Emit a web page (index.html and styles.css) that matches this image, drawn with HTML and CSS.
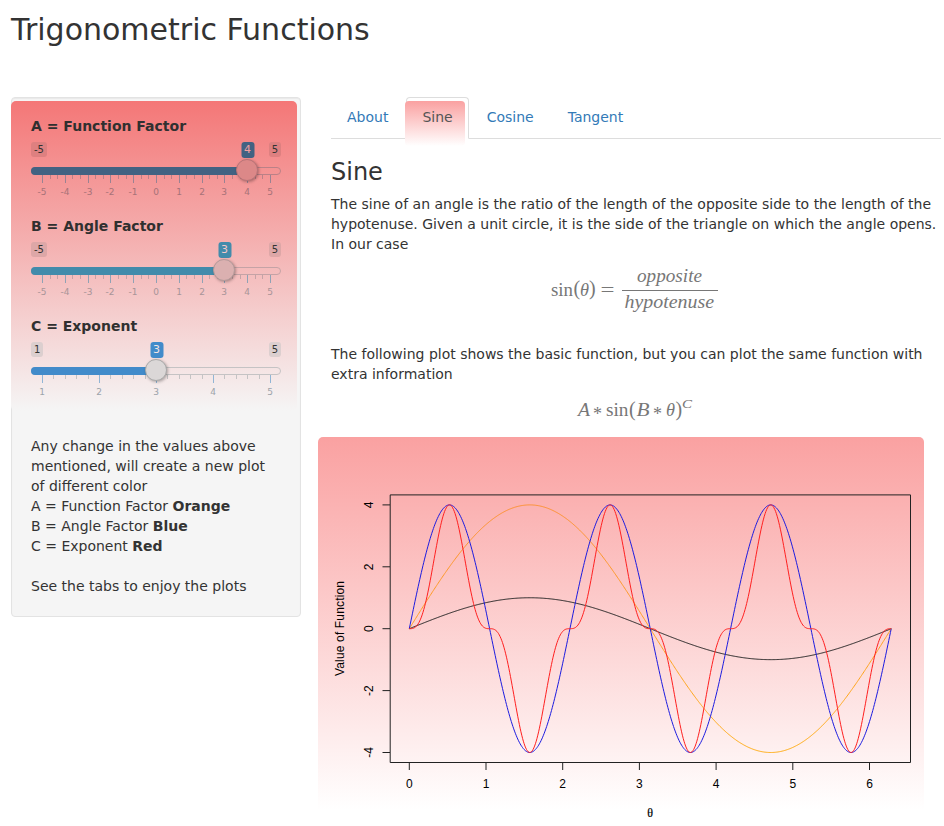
FILE: index.html
```html
<!DOCTYPE html>
<html lang="en">
<head>
<meta charset="utf-8">
<title>Trigonometric Functions</title>
<link rel="stylesheet" href="styles.css">
</head>
<body>
<h2 class="page-title">Trigonometric Functions</h2>
<div class="layout">
  <form class="well">
    <div class="slider slider-a" data-min="-5" data-max="5" data-value="4" data-minor="3">
      <label>A = Function Factor</label>
      <div class="control"></div>
    </div>
    <div class="slider slider-b" data-min="-5" data-max="5" data-value="3" data-minor="3">
      <label>B = Angle Factor</label>
      <div class="control"></div>
    </div>
    <div class="slider slider-c" data-min="1" data-max="5" data-value="3" data-minor="5">
      <label>C = Exponent</label>
      <div class="control"></div>
    </div>
    <div class="notes">Any change in the values above mentioned, will create a new plot of different color<br>A = Function Factor <b>Orange</b><br>B = Angle Factor <b>Blue</b><br>C = Exponent <b>Red</b><br><br>See the tabs to enjoy the plots</div>
  </form>
  <main class="content">
    <ul class="tabs">
      <li><a>About</a></li>
      <li class="active"><a>Sine</a></li>
      <li><a>Cosine</a></li>
      <li><a>Tangent</a></li>
    </ul>
    <h3>Sine</h3>
    <p>The sine of an angle is the ratio of the length of the opposite side to the length of the hypotenuse. Given a unit circle, it is the side of the triangle on which the angle opens. In our case</p>
    <svg class="math math-ratio" viewBox="331 254 610 90">
      <text x="551" y="295.5" textLength="22" lengthAdjust="spacingAndGlyphs">sin</text>
      <text x="573.5" y="295" class="paren">(</text>
      <text class="it" x="580" y="295.5" textLength="9" lengthAdjust="spacingAndGlyphs">θ</text>
      <text x="589" y="295" class="paren">)</text>
      <text x="600.5" y="295.5" textLength="14" lengthAdjust="spacingAndGlyphs">=</text>
      <text class="it" x="637" y="282" textLength="65" lengthAdjust="spacingAndGlyphs">opposite</text>
      <path d="M622 290.5H718"/>
      <text class="it" x="624.5" y="308" textLength="89.5" lengthAdjust="spacingAndGlyphs">hypotenuse</text>
    </svg>
    <p>The following plot shows the basic function, but you can plot the same function with extra information</p>
    <svg class="math math-general" viewBox="331 384 610 53">
      <text class="it" x="578" y="416.3" textLength="12" lengthAdjust="spacingAndGlyphs">A</text>
      <text x="593" y="420">*</text>
      <text x="606" y="416.3" textLength="22.5" lengthAdjust="spacingAndGlyphs">sin</text>
      <text x="629" y="416" class="paren">(</text>
      <text class="it" x="636.5" y="416.3" textLength="13" lengthAdjust="spacingAndGlyphs">B</text>
      <text x="653" y="420">*</text>
      <text class="it" x="666" y="416.3" textLength="9" lengthAdjust="spacingAndGlyphs">θ</text>
      <text x="675.5" y="416" class="paren">)</text>
      <text class="it small" x="682" y="408.3" textLength="10" lengthAdjust="spacingAndGlyphs">C</text>
    </svg>
    <div class="plot"><svg id="chart" viewBox="318 437 606 389"></svg></div>
  </main>
</div>
<script src="app.js"></script>
</body>
</html>
```
FILE: styles.css
```css
* { box-sizing: border-box; }
body {
  margin: 0;
  height: 826px;
  overflow: hidden;
  background: #fff;
  color: #333;
  font: 14px/20px "DejaVu Sans", sans-serif;
}
h2, h3 { font-weight: 400; margin: 0; }
.page-title { font-size: 30px; line-height: 33px; padding: 13px 11px 51px; }
.layout { display: flex; gap: 30px; padding-left: 11px; align-items: flex-start; }
.well {
  width: 290px;
  height: 520px;
  flex: none;
  padding: 18px 19px;
  border: 1px solid #e3e3e3;
  border-radius: 4px;
  background-color: #f5f5f5;
  box-shadow: inset 0 1px 1px rgba(0, 0, 0, .05);
  position: relative;
}
.well::before {
  content: "";
  position: absolute;
  left: -1px;
  top: 3px;
  width: 286px;
  height: 310px;
  border-radius: 5px;
  background: linear-gradient(#f47777, #f5f5f5);
}
.slider { height: 100px; position: relative; }
.slider label { display: block; font-weight: 700; height: 20px; color: #303030; }
.slider-a { --bar: #426282; --knob: #dc8888; --edge: #b87478; --badge: #de8080; --tick: #9b8292; --minor: #bb8187; --num: #a77278; --current: #f0a0a0; }
.slider-b { --bar: #428bab; --knob: #dbb0b0; --edge: #b49a9a; --badge: #dda7a7; --tick: #90a2b5; --minor: #c5a3a6; --num: #a89498; --current: #f4c8c8; }
.slider-c { --bar: #428bca; --knob: #dbd7d7; --edge: #aaa; --badge: #dccfcf; --tick: #91b5d5; --minor: #c5c3c4; --num: #9ba3aa; --current: #f4e4e4; }
.control { position: relative; width: 250px; height: 70px; }
.badge {
  position: absolute;
  top: 6px;
  height: 15px;
  padding: 0 3px;
  border-radius: 3px;
  background: var(--badge);
  color: #333;
  font-size: 10px;
  line-height: 15px;
}
.badge.min { left: 0; }
.badge.max { right: 0; }
.badge.current {
  transform: translateX(-50%);
  height: 16px;
  width: 13px;
  text-align: center;
  font-size: 11px;
  line-height: 16px;
  background: var(--bar);
  color: var(--current);
}
.track, .fill { position: absolute; left: 0; top: 31px; height: 8px; border-radius: 5px; }
.track { width: 250px; border: 1px solid var(--minor); }
.fill { background: var(--bar); }
.knob {
  position: absolute;
  top: 23px;
  width: 22px;
  height: 22px;
  border: 1px solid var(--edge);
  border-radius: 50%;
  background: var(--knob);
  box-shadow: 1px 1px 3px rgba(0, 0, 0, .3);
  transform: translateX(-50%);
}
.ticks { position: absolute; left: 0; top: 39px; width: 250px; height: 25px; }
.ticks text { font: 9px "DejaVu Sans", sans-serif; text-anchor: middle; fill: var(--num); }
.ticks .major { fill: var(--tick); }
.ticks .minor { fill: var(--minor); }
.notes { position: relative; margin-top: 20px; }
.content { width: 610px; }
.tabs { display: flex; gap: 2px; list-style: none; height: 42px; margin: 0; padding: 0; border-bottom: 1px solid #ddd; }
.tabs li { height: 42px; }
.tabs a {
  position: relative;
  display: block;
  height: 42px;
  padding: 9px 15px 11px;
  border: 1px solid transparent;
  border-radius: 4px 4px 0 0;
  color: #337ab7;
}
.tabs .active a { border-color: #ddd; border-bottom-color: #fff; background: #fff; color: #555; z-index: 0; }
.tabs .active a::before {
  content: "";
  position: absolute;
  z-index: -1;
  left: -2px;
  top: 3px;
  width: 60px;
  height: 45px;
  border-radius: 4px;
  background: linear-gradient(#faa1a1, #fff);
}
h3 { font-size: 24px; line-height: 26px; padding: 20px 0 9px; }
p { margin: 0; }
.math { display: block; width: 610px; }
.math-ratio { height: 90px; }
.math-general { height: 53px; }
.math text { font-family: "Liberation Serif", serif; fill: #777; font-size: 18px; }
.math .it { font-style: italic; }
.math .paren { font-size: 20px; }
.math .small { font-size: 13px; }
.math path { stroke: #777; }
.plot { margin-left: -13px; width: 606px; height: 389px; border-radius: 5px; background: linear-gradient(#faa1a1, #fff 373px); }
#chart { display: block; width: 606px; height: 389px; }
#chart text { font: 12px "Liberation Sans", sans-serif; text-anchor: middle; fill: #000; }
#chart .theta { font: 12px "Liberation Serif", serif; stroke: #000; stroke-width: .2; }
#chart path { fill: none; stroke-width: 1; }
#chart .axis { stroke: #222; stroke-width: 1; }
```
FILE: app.js
```javascript
document.querySelectorAll('.slider').forEach(function (el) {
  var min = +el.dataset.min, max = +el.dataset.max, value = +el.dataset.value, sub = +el.dataset.minor;
  function pos(v) { return 11 + (v - min) / (max - min) * 228; }
  var svg = '';
  for (var i = 0; i <= (max - min) * sub; i++) {
    var x = Math.round(pos(min + i / sub)), major = i % sub === 0;
    svg += '<rect class="' + (major ? 'major' : 'minor') + '" x="' + x + '" y="0" width="1" height="' + (major ? 8 : 4) + '"/>';
    if (major) svg += '<text x="' + x + '" y="20">' + (min + i / sub) + '</text>';
  }
  var c = Math.floor(pos(value));
  el.querySelector('.control').innerHTML =
    '<span class="badge min">' + min + '</span><span class="badge max">' + max + '</span>' +
    '<span class="badge current" style="left:' + (c + 0.5) + 'px">' + value + '</span>' +
    '<span class="track"></span><span class="fill" style="width:' + c + 'px"></span>' +
    '<svg class="ticks">' + svg + '</svg><span class="knob" style="left:' + c + 'px"></span>';
});

function px(x) { return 409.3 + x * 76.7; }
function py(y) { return 628.7 - y * 30.95; }
function curve(f, color) {
  var d = '';
  for (var i = 0; i <= 600; i++) {
    var x = i / 600 * 2 * Math.PI;
    d += (i ? 'L' : 'M') + px(x).toFixed(2) + ' ' + py(f(x)).toFixed(2);
  }
  return '<path d="' + d + '" stroke="' + color + '"/>';
}
var out = '<defs><linearGradient id="orange" x1="0" y1="0" x2="0" y2="1"><stop offset="0" stop-color="#fc9030"/><stop offset="1" stop-color="#ffab10"/></linearGradient></defs>';
out += curve(Math.sin, '#222');
out += curve(function (x) { return 4 * Math.sin(x); }, 'url(#orange)');
out += curve(function (x) { return 4 * Math.sin(3 * x); }, '#1c1ce0');
out += curve(function (x) { return 4 * Math.pow(Math.sin(3 * x), 3); }, '#ff2020');
out += '<path class="axis" d="M390.2 494.9H910.5V762.5H390.2Z"/>';
for (var i = 0; i <= 6; i++) {
  out += '<path class="axis" d="M' + px(i) + ' 762.5v7.5"/><text x="' + px(i) + '" y="788">' + i + '</text>';
}
for (var j = -4; j <= 4; j += 2) {
  out += '<path class="axis" d="M390 ' + py(j) + 'h-7.5"/><text transform="translate(373 ' + py(j) + ') rotate(-90)">' + j + '</text>';
}
out += '<text transform="translate(344 628.5) rotate(-90)" textLength="95">Value of Function</text><text class="theta" x="650" y="817">θ</text>';
document.getElementById('chart').innerHTML = out;
```
